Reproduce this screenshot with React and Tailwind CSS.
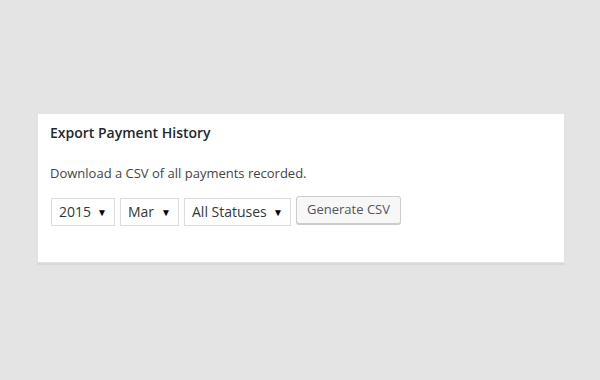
import React from 'react';

const Select = ({ label, width }) => (
  <div
    className={`flex items-center justify-between h-[28px] border border-[#dddddd] bg-white pl-[7px] pr-[7px] text-[14px] text-[#32373c] ${width}`}
  >
    <span>{label}</span>
    <span className="text-[10px] text-black leading-none">▼</span>
  </div>
);

export default function App() {
  return (
    <div className="w-[600px] h-[380px] bg-[#e5e4e4] pt-[113px] pl-[37px] font-['Open_Sans',sans-serif]">
      <div className="w-[528px] h-[150px] bg-white border border-[#e3e3e3] shadow-[0_2px_1px_rgba(0,0,0,0.05)]">
        <h3 className="px-[12px] pt-[10px] text-[14px] font-semibold text-[#23282d] leading-[18px]">
          Export Payment History
        </h3>
        <div className="px-[12px]">
          <p className="mt-[22px] text-[13px] text-[#444444] leading-[18px]">
            Download a CSV of all payments recorded.
          </p>
          <div className="mt-[14px] flex items-center gap-[5px] pl-[1px]">
            <Select label="2015" width="w-[64px]" />
            <Select label="Mar" width="w-[59px]" />
            <Select label="All Statuses" width="w-[107px]" />
            <button
              type="button"
              className="h-[28px] w-[105px] mb-[3px] rounded-[3px] border border-[#cccccc] bg-[#f7f7f7] text-[13px] text-[#555555] shadow-[0_1px_0_#cccccc]"
            >
              Generate CSV
            </button>
          </div>
        </div>
      </div>
    </div>
  );
}
